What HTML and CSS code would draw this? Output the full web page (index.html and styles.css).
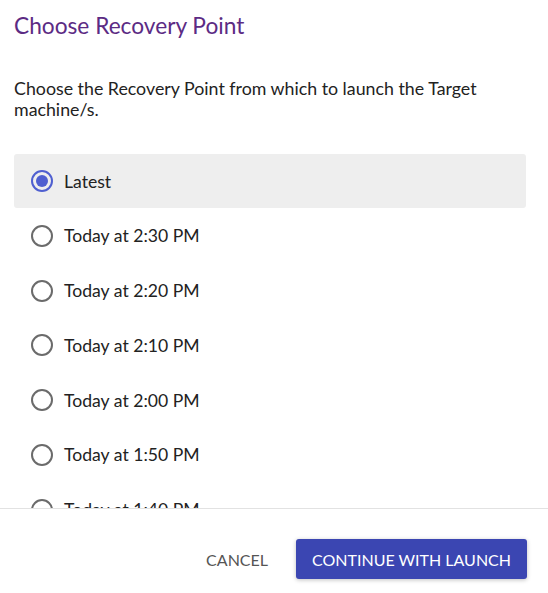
FILE: index.html
```html
<!DOCTYPE html>
<html lang="en">
<head>
    <meta charset="UTF-8">
    <meta name="viewport" content="width=device-width, initial-scale=1.0">
    <title>Choose Recovery Point</title>
    <link rel="stylesheet" href="styles.css">
</head>
<body>
    <div class="dialog">
        <div class="dialog-body">
            <h2 class="title">Choose Recovery Point</h2>
            <p class="desc">Choose the Recovery Point from which to launch the Target machine/s.</p>

            <div class="points">
                <label class="point selected">
                    <input type="radio" name="point" checked>
                    <span class="radio"></span>
                    <span>Latest</span>
                </label>
                <label class="point">
                    <input type="radio" name="point">
                    <span class="radio"></span>
                    <span>Today at 2:30 PM</span>
                </label>
                <label class="point">
                    <input type="radio" name="point">
                    <span class="radio"></span>
                    <span>Today at 2:20 PM</span>
                </label>
                <label class="point">
                    <input type="radio" name="point">
                    <span class="radio"></span>
                    <span>Today at 2:10 PM</span>
                </label>
                <label class="point">
                    <input type="radio" name="point">
                    <span class="radio"></span>
                    <span>Today at 2:00 PM</span>
                </label>
                <label class="point">
                    <input type="radio" name="point">
                    <span class="radio"></span>
                    <span>Today at 1:50 PM</span>
                </label>
                <label class="point">
                    <input type="radio" name="point">
                    <span class="radio"></span>
                    <span>Today at 1:40 PM</span>
                </label>
            </div>
        </div>

        <div class="dialog-footer">
            <button class="btn btn-text">Cancel</button>
            <button class="btn btn-primary">Continue with Launch</button>
        </div>
    </div>
</body>
</html>
```

FILE: styles.css
```css
* {
    box-sizing: border-box;
}
body {
    margin: 0;
    font-family: Lato, "Open Sans", sans-serif;
    color: #222;
    background: white;
}
.dialog {
    height: 593px;
    display: flex;
    flex-direction: column;
}
.dialog-body {
    height: 508px;
    overflow: hidden;
    padding: 12px 22px 0 14px;
}
.title {
    margin: 0;
    font-size: 22.7px;
    line-height: 28px;
    font-weight: 400;
    color: #5c2b84;
}
.desc {
    margin: 38px 0 0;
    font-size: 17.8px;
    line-height: 21px;
    max-width: 480px;
}
.points {
    margin-top: 34px;
    display: flex;
    flex-direction: column;
    gap: 0.8px;
}
.point {
    display: flex;
    align-items: center;
    gap: 11px;
    height: 54px;
    flex-shrink: 0;
    padding: 0 17px;
    font-size: 17.6px;
    border-radius: 3px;
    cursor: pointer;
}
.point.selected {
    background: #eeeeee;
}
.point input {
    display: none;
}
.radio {
    width: 22px;
    height: 22px;
    border: 2px solid #6b6b6b;
    border-radius: 50%;
    display: flex;
    align-items: center;
    justify-content: center;
    flex-shrink: 0;
}
.point input:checked + .radio {
    border-color: #4f5fd0;
}
.point input:checked + .radio::after {
    content: "";
    width: 12px;
    height: 12px;
    border-radius: 50%;
    background: #4f5fd0;
}
.dialog-footer {
    flex: 1;
    border-top: 1px solid #e2e2e2;
    display: flex;
    justify-content: flex-end;
    align-items: flex-start;
    gap: 28px;
    padding: 30px 21px 0;
}
.btn {
    font-family: inherit;
    font-size: 16px;
    text-transform: uppercase;
    height: 40px;
    border: none;
    border-radius: 3px;
    padding: 0 16px;
    cursor: pointer;
}
.btn-text {
    background: none;
    color: #555;
    padding: 0 0;
}
.btn-primary {
    background: #3b46b2;
    color: white;
    box-shadow: 0 1px 4px rgba(0,0,0,0.25);
}
.btn-primary:hover {
    background: #2f3a9c;
}
```
